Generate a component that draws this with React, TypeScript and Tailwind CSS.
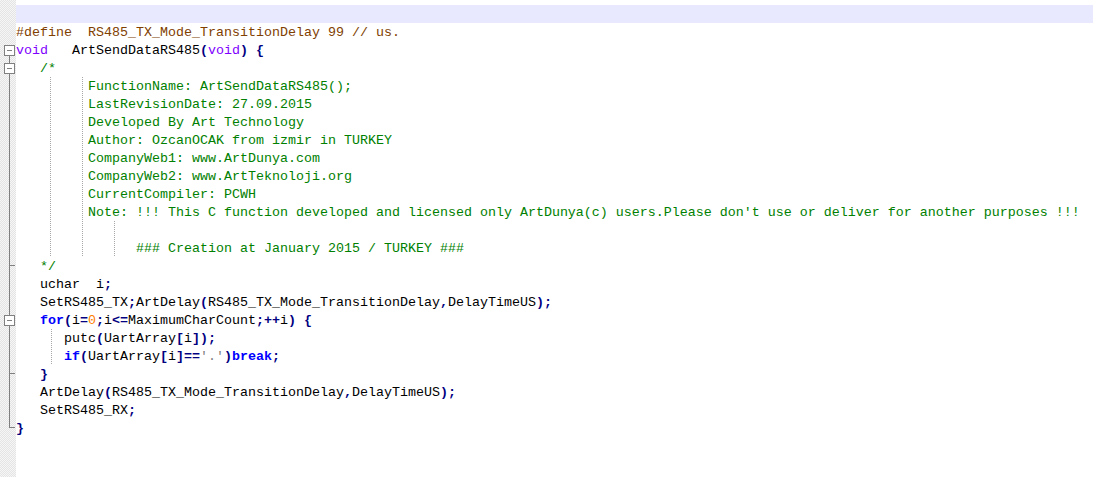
import React from 'react';

type Fold = 'none' | 'boxTop' | 'boxMid' | 'line' | 'tick' | 'end';
type Kind = 'blank' | 'pre' | 'code' | 'comment';

interface Row {
    kind: Kind;
    text: string;
    fold: Fold;
    guides?: number[];
    current?: boolean;
}

const rows: Row[] = [
    { kind: 'blank', text: '', fold: 'none', current: true },
    { kind: 'pre', text: '#define  RS485_TX_Mode_TransitionDelay 99 // us.', fold: 'none' },
    { kind: 'code', text: 'void   ArtSendDataRS485(void) {', fold: 'boxTop' },
    { kind: 'comment', text: '   /*', fold: 'boxMid' },
    { kind: 'comment', text: '         FunctionName: ArtSendDataRS485();', fold: 'line', guides: [34, 66] },
    { kind: 'comment', text: '         LastRevisionDate: 27.09.2015', fold: 'line', guides: [34, 66] },
    { kind: 'comment', text: '         Developed By Art Technology', fold: 'line', guides: [34, 66] },
    { kind: 'comment', text: '         Author: OzcanOCAK from izmir in TURKEY', fold: 'line', guides: [34, 66] },
    { kind: 'comment', text: '         CompanyWeb1: www.ArtDunya.com', fold: 'line', guides: [34, 66] },
    { kind: 'comment', text: '         CompanyWeb2: www.ArtTeknoloji.org', fold: 'line', guides: [34, 66] },
    { kind: 'comment', text: '         CurrentCompiler: PCWH', fold: 'line', guides: [34, 66] },
    {
        kind: 'comment',
        text: "         Note: !!! This C function developed and licensed only ArtDunya(c) users.Please don't use or deliver for another purposes !!!",
        fold: 'line',
        guides: [34, 66],
    },
    { kind: 'comment', text: '', fold: 'line', guides: [34, 66, 98] },
    { kind: 'comment', text: '               ### Creation at January 2015 / TURKEY ###', fold: 'line', guides: [34, 66, 98] },
    { kind: 'comment', text: '   */', fold: 'tick' },
    { kind: 'code', text: '   uchar  i;', fold: 'line' },
    { kind: 'code', text: '   SetRS485_TX;ArtDelay(RS485_TX_Mode_TransitionDelay,DelayTimeUS);', fold: 'line' },
    { kind: 'code', text: '   for(i=0;i<=MaximumCharCount;++i) {', fold: 'boxMid' },
    { kind: 'code', text: '      putc(UartArray[i]);', fold: 'line', guides: [35] },
    { kind: 'code', text: "      if(UartArray[i]=='.')break;", fold: 'line', guides: [35] },
    { kind: 'code', text: '   }', fold: 'tick' },
    { kind: 'code', text: '   ArtDelay(RS485_TX_Mode_TransitionDelay,DelayTimeUS);', fold: 'line' },
    { kind: 'code', text: '   SetRS485_RX;', fold: 'line' },
    { kind: 'code', text: '}', fold: 'end' },
];

const KEYWORDS = ['for', 'if', 'break'];
const TYPES = ['void'];

// splits a C line into coloured pieces, Notepad++ default style
const tokenize = (line: string) => {
    const parts = line.match(/\s+|[A-Za-z_]\w*|\d+|'[^']*'|./g) || [];
    return parts.map((t, i) => {
        let cls = 'text-black';
        if (/^\s+$/.test(t)) cls = '';
        else if (KEYWORDS.includes(t)) cls = 'text-[#0000ff] font-bold';
        else if (TYPES.includes(t)) cls = 'text-[#8000ff]';
        else if (/^\d+$/.test(t)) cls = 'text-[#ff8000]';
        else if (t.startsWith("'")) cls = 'text-[#808080]';
        else if (!/^\w/.test(t)) cls = 'text-[#000080] font-bold';
        return (
            <span key={i} className={cls}>
                {t}
            </span>
        );
    });
};

const FoldCell: React.FC<{ fold: Fold }> = ({ fold }) => {
    const vline = 'ml-[5px] w-px bg-[#808080]';
    return (
        <div className="flex h-[18px] w-[16px] pl-[4px]">
            <div className="flex w-[11px] flex-col">
                {fold === 'line' && <div className={`h-[18px] ${vline}`} />}
                {(fold === 'tick' || fold === 'end') && (
                    <>
                        <div className={`h-[8px] ${vline}`} />
                        <div className="ml-[5px] h-px w-[6px] bg-[#808080]" />
                        {fold === 'tick' && <div className={`h-[9px] ${vline}`} />}
                    </>
                )}
                {(fold === 'boxTop' || fold === 'boxMid') && (
                    <>
                        <div className={`h-[4px] ${fold === 'boxMid' ? vline : ''}`} />
                        <div className="flex h-[11px] w-[11px] items-center justify-center border border-[#808080] bg-white">
                            <div className="h-px w-[5px] bg-[#808080]" />
                        </div>
                        <div className={`h-[3px] ${vline}`} />
                    </>
                )}
            </div>
        </div>
    );
};

const CodeLine: React.FC<{ row: Row }> = ({ row }) => {
    let content: React.ReactNode = row.text;
    let color = 'text-black';
    if (row.kind === 'pre') color = 'text-[#804000]';
    if (row.kind === 'comment') color = 'text-[#008000]';
    if (row.kind === 'code') content = tokenize(row.text);

    return (
        <div className={`relative h-[18px] whitespace-pre pt-[2px] leading-[16px] ${color} ${row.current ? 'bg-[#e8e8ff]' : ''}`}>
            {/* dotted indent guides sit over the indentation */}
            {row.guides?.map((g) => (
                <div
                    key={g}
                    className="absolute top-0 h-[18px] w-px bg-[repeating-linear-gradient(to_bottom,#a8a8a8_0_1px,transparent_1px_2px)]"
                    style={{ left: g }}
                />
            ))}
            {content}
        </div>
    );
};

export default function App() {
    return (
        <div className="flex h-[477px] w-full overflow-hidden bg-white font-['Liberation_Mono',monospace] text-[13.3333px]">
            <div className="h-full w-[16px] shrink-0 bg-[repeating-conic-gradient(#e4e4e4_0_25%,#f6f6f6_0_50%)] bg-size-[2px_2px] pt-[5px]">
                {rows.map((r, i) => (
                    <FoldCell key={i} fold={r.fold} />
                ))}
            </div>
            <div className="flex-1 pt-[5px]">
                {rows.map((r, i) => (
                    <CodeLine key={i} row={r} />
                ))}
            </div>
        </div>
    );
}
